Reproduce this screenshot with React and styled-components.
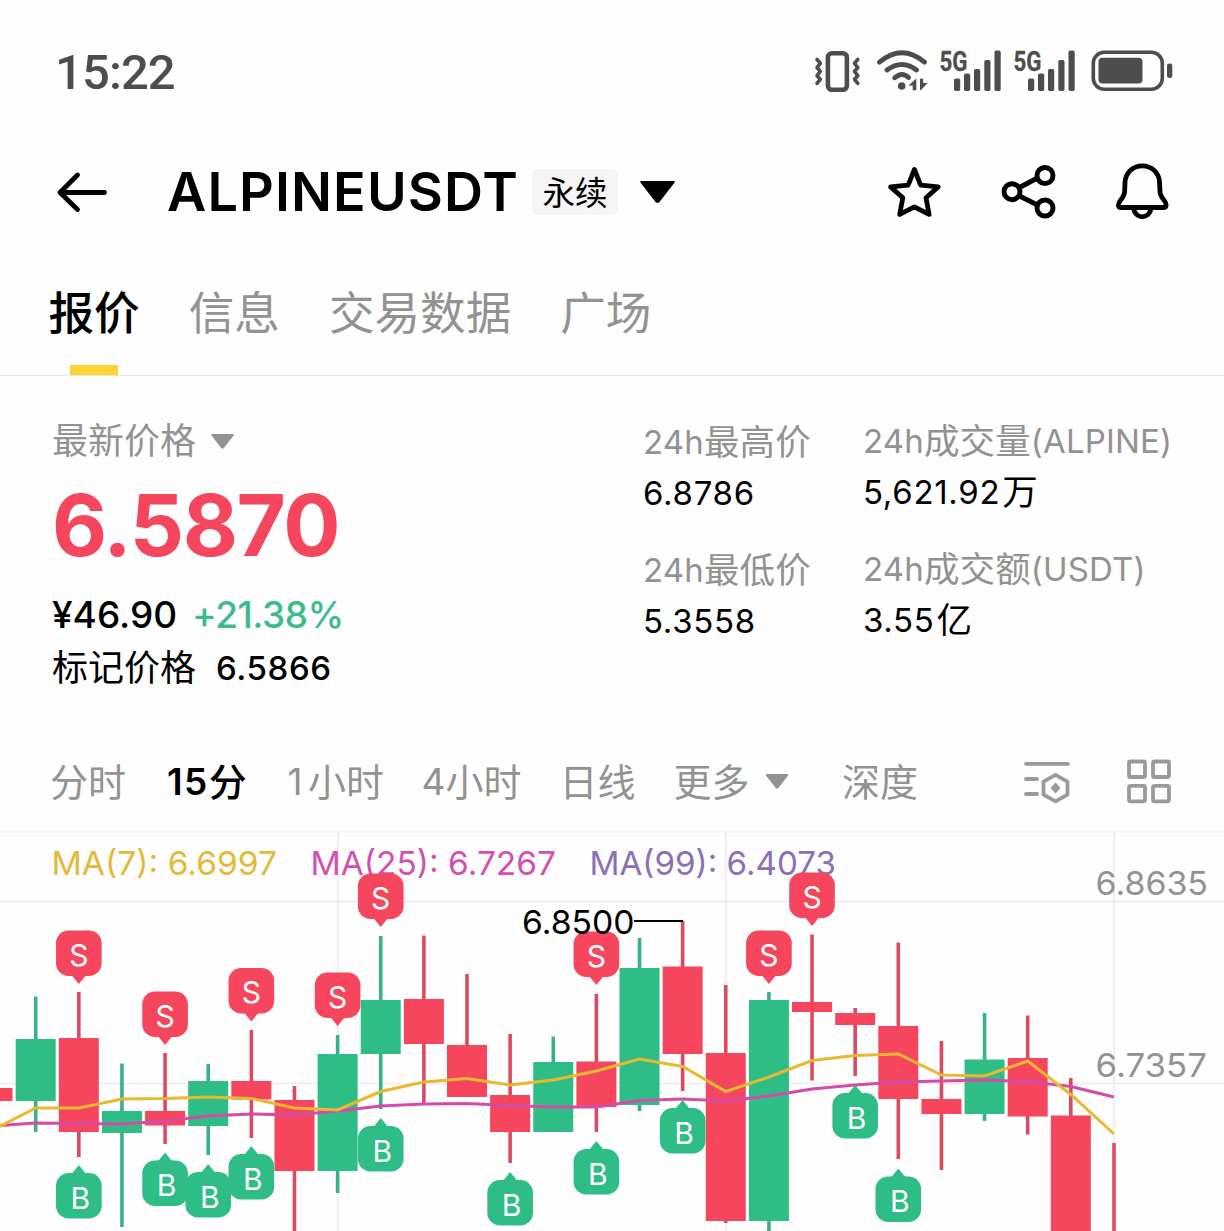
import React from "react"
import styled, { createGlobalStyle } from "styled-components"

const UP = "#2ebd85"
const DOWN = "#f6465d"
const GREY = "#929292"

const tabs = ["报价", "信息", "交易数据", "广场"]

const legend = [
  { label: "MA(7): 6.6997", x: 53, width: 223, color: "#e2b93b" },
  { label: "MA(25): 6.7267", x: 312, width: 243, color: "#d250b0" },
  { label: "MA(99): 6.4073", x: 591, width: 244, color: "#8a70b4" },
]

// distance between candles and x of the first one
const STEP = 43.13
const FIRST = 35.7
const xOf = (i) => FIRST + i * STEP

// [up, high, top, bottom, low, sell marker tip, buy marker tip]
const candles = [
  [1, 996.5, 1039, 1101, 1132],
  [0, 992, 1038, 1132, 1157, 984, 1165],
  [1, 1063.5, 1111, 1133, 1227],
  [0, 1053, 1111, 1125.5, 1144, 1045, 1152.5],
  [1, 1064, 1081, 1126, 1155, null, 1164],
  [0, 1030, 1081, 1099.5, 1138, 1021.5, 1146],
  [0, 1086, 1100, 1171, 1240],
  [1, 1035, 1054, 1171, 1193, 1026, null],
  [1, 936, 1000, 1054, 1109, 927, 1118],
  [0, 935.5, 999, 1044, 1103],
  [0, 974, 1045, 1097, 1097],
  [0, 1034, 1095, 1132, 1163, null, 1172],
  [1, 1036.5, 1062, 1132, 1132],
  [0, 994, 1061.5, 1107, 1132, 985, 1141],
  [1, 938, 968, 1105, 1111],
  [0, 921, 966.5, 1054, 1091, null, 1100],
  [0, 985, 1053, 1221, 1223],
  [1, 992, 1000, 1221, 1240, 984, null],
  [0, 934.5, 1002, 1012, 1080.5, 926, null],
  [0, 1008, 1013, 1025, 1076, null, 1085],
  [0, 942.5, 1026, 1099, 1159, null, 1168.5],
  [0, 1041, 1099, 1114, 1170],
  [1, 1013, 1059.5, 1114, 1121],
  [0, 1015.5, 1058, 1116.5, 1134.5],
  [0, 1078, 1115.5, 1240, 1240],
]

const ma7 = [1130, 1108, 1108, 1099, 1098.5, 1097, 1098.5, 1108, 1110, 1091.5, 1082, 1078.5, 1085, 1080, 1071, 1059, 1066.5, 1091.5, 1077, 1060.5, 1055.5, 1054, 1075, 1076, 1061, 1094.5, 1134]
const ma25 = [1126, 1123, 1123.5, 1124, 1121, 1116, 1114, 1115, 1111, 1106, 1104, 1103.5, 1105.5, 1107, 1107, 1100.5, 1099, 1101, 1096, 1089, 1085, 1082, 1081, 1080, 1081.5, 1086.5, 1097]
const toLine = (values) => values.map((y, i) => `${xOf(i - 1)},${y}`).join(" ")

function Signal() {
  return (
    <svg width="66" height="60" viewBox="937 41 66 60" fill="#4d4d4d">
      <text x="939.5" y="70.5" fontFamily="Roboto" fontWeight="700" fontSize="28" stroke="#4d4d4d" strokeWidth=".3" textLength="28" lengthAdjust="spacingAndGlyphs">5G</text>
      <rect x="954" y="78.5" width="6.2" height="12.5" rx="1.8" />
      <rect x="964" y="73.5" width="6.2" height="17.5" rx="1.8" />
      <rect x="974" y="69" width="6.2" height="22" rx="1.8" />
      <rect x="984.3" y="60" width="6.2" height="31" rx="1.8" />
      <rect x="994.5" y="50.5" width="6.2" height="40.5" rx="1.8" />
    </svg>
  )
}

function StatusIcons() {
  return (
    <IconRow>
      <svg width="48" height="44" viewBox="813 49 48 44" fill="none" stroke="#4d4d4d" strokeLinecap="round" strokeLinejoin="round">
        <rect x="827.9" y="53.2" width="19" height="36.6" rx="4" strokeWidth="4.6" />
        <path d="M817 59.5l3.3 3.8-3.3 4.2 3.3 4-3.3 4.2 3.3 3.6-3.3 4M857.8 59.5l-3.3 3.8 3.3 4.2-3.3 4 3.3 4.2-3.3 3.6 3.3 4" strokeWidth="3.6" />
      </svg>
      <WifiIcon width="52" height="44" viewBox="876 49 52 44" fill="none" stroke="#4d4d4d" strokeWidth="4.8" strokeLinecap="round">
        <path d="M879.5 62.2Q902 43.5 924.5 62.2M887 70Q902 59 916.5 70M894.8 77.8Q902 71.5 908.5 77.5" />
        <circle cx="901.7" cy="86" r="3.8" fill="#4d4d4d" stroke="none" />
        <path d="M908.5 85.5l7.8-7v11.7h-3.6v-4.7zM920 78.7h3.2v4.4h4.4L920.8 90.2h-.8z" fill="#4d4d4d" stroke="none" />
      </WifiIcon>
      <Signal />
      <SecondSignal><Signal /></SecondSignal>
      <svg width="84" height="44" viewBox="1090 49 84 44" fill="#4d4d4d">
        <rect x="1093.3" y="52.2" width="69" height="37" rx="11" fill="none" stroke="#4d4d4d" strokeWidth="3.6" />
        <rect x="1098.5" y="57.8" width="44" height="25.7" rx="4" />
        <rect x="1167" y="63.5" width="5.3" height="14.5" rx="2.3" />
      </svg>
    </IconRow>
  )
}

function HeaderActions() {
  return (
    <IconRow>
      <svg width="60" height="60" viewBox="884 162 60 60" fill="none" stroke="#000" strokeWidth="4.8" strokeLinejoin="round">
        <path d="M914.4 169.4l5.5 13.9 1 1.9 17.3 1.7-12.2 10.8 3.1 16.7-14.7-7.6-14.7 7.6 3.1-16.7-12.2-10.8 17.3-1.7 1-1.9z" />
      </svg>
      <ShareIcon width="60" height="60" viewBox="999 162 60 60" fill="none" stroke="#000" strokeWidth="4.9">
        <circle cx="1012" cy="191.7" r="8" />
        <circle cx="1045" cy="175.5" r="8" />
        <circle cx="1045" cy="208" r="8" />
        <path d="M1019.5 187.5l18-9.5M1019.5 196l18 9" />
      </ShareIcon>
      <svg width="60" height="60" viewBox="1112 162 60 60" fill="none" stroke="#000" strokeWidth="4.8" strokeLinejoin="round">
        <path d="M1142.3 165.8c-9.7 0-17 7.2-17.3 17l-.4 9c-.2 3.5-2.5 6.5-4.6 9.3-1.5 2-2.7 6.4.6 6.4h43.4c3.3 0 2.1-4.4.6-6.4-2.1-2.8-4.4-5.8-4.6-9.3l-.4-9c-.3-9.8-7.6-17-17.3-17z" />
        <path d="M1133.5 208.5c1 5.2 4.5 8.3 8.8 8.3s7.8-3.1 8.8-8.3" />
      </svg>
    </IconRow>
  )
}

function Marker({ x, tip, sell }) {
  const top = sell ? tip - 53.5 : tip + 8
  return (
    <g>
      <rect x={x - 22.8} y={top} width="45.6" height="45.5" rx="12.5" fill={sell ? DOWN : UP} />
      {sell
        ? <path d={`M${x - 9} ${tip - 8.5}l2.5 .5L${x} ${tip}l6.5 -8 2.5-.5z`} fill={DOWN} />
        : <path d={`M${x - 9} ${tip + 8.5}l2.5-.5L${x} ${tip}l6.5 8 2.5.5z`} fill={UP} />}
      <MarkerText x={sell ? x : x + 1.5} y={sell ? top + 35 : top + 35.5}>{sell ? "S" : "B"}</MarkerText>
    </g>
  )
}

function Chart() {
  return (
    <ChartSvg viewBox="0 833 1224 398">
      <g stroke="#ececec" strokeWidth="1.6">
        <path d="M0 901.5H1224M0 1083.5H1224M338 833V1231M726 833V1231M1114 833V1231" />
      </g>
      {legend.map((item) => (
        <ChartText key={item.label} x={item.x - 1.5} y="875.3" fill={item.color} textLength={item.width + 2.5} lengthAdjust="spacingAndGlyphs">{item.label}</ChartText>
      ))}
      <ChartText x="1095.5" y="895.3" fill={GREY} textLength="112.5" lengthAdjust="spacingAndGlyphs">6.8635</ChartText>
      <ChartText x="1095.5" y="1077.3" fill={GREY} textLength="111.5" lengthAdjust="spacingAndGlyphs">6.7357</ChartText>

      <rect x="-28" y="1088" width="40.5" height="13" fill={DOWN} />
      {candles.map(([up, high, top, bottom, low], i) => (
        <g key={i}>
          <path d={`M${xOf(i)} ${high}V${low}`} stroke={up ? "#38b184" : "#dc4a61"} strokeWidth="3.6" />
          <rect x={xOf(i) - 20} y={top} width="40" height={bottom - top} fill={up ? UP : DOWN} />
        </g>
      ))}
      <path d="M1114 1143V1231" stroke="#e8485f" strokeWidth="3.6" />

      <polyline points={toLine(ma25)} fill="none" stroke="#d64aa8" strokeWidth="3" />
      <polyline points={toLine(ma7)} fill="none" stroke="#e8b830" strokeWidth="3" />

      <path d="M634 921H683" stroke="#000" strokeWidth="1.8" />
      {candles.map((c, i) => (
        <g key={i}>
          {c[5] && <Marker x={xOf(i)} tip={c[5]} sell />}
          {c[6] && <Marker x={xOf(i)} tip={c[6]} />}
        </g>
      ))}
      <ChartText x="522" y="934.3" fill="#000" textLength="112.5" lengthAdjust="spacingAndGlyphs">6.8500</ChartText>
    </ChartSvg>
  )
}

function App() {
  return (
    <Page>
      <GlobalStyle />
      <StatusBar>
        <Clock>15:22</Clock>
        <StatusIcons />
      </StatusBar>

      <Header>
        <svg width="54" height="44" viewBox="55 170 54 44" fill="none" stroke="#000" strokeWidth="4.8" strokeLinecap="round" strokeLinejoin="round">
          <path d="M104.5 192.5H60M77.5 175L60 192.5l17.5 17" />
        </svg>
        <Symbol>ALPINEUSDT</Symbol>
        <Badge>永续</Badge>
        <Caret $w={35} $h={23} $color="#000" />
        <HeaderActions />
      </Header>

      <Tabs>
        {tabs.map((tab, i) => (
          <Tab key={tab} $active={i === 0}>{tab}</Tab>
        ))}
      </Tabs>

      <Ticker>
        <PriceBlock>
          <PriceLabel>最新价格 <Caret $w={23} $h={15} $color={GREY} /></PriceLabel>
          <LastPrice>6.5870</LastPrice>
          <Converted>¥46.90 <Change>+21.38%</Change></Converted>
          <MarkPrice>标记价格 <span>6.5866</span></MarkPrice>
        </PriceBlock>
        <StatColumn $w={220}>
          <Stat><dt>24h<Han>最高价</Han></dt><dd>6.8786</dd></Stat>
          <Stat><dt>24h<Han>最低价</Han></dt><dd>5.3558</dd></Stat>
        </StatColumn>
        <StatColumn $up>
          <Stat><dt>24h<Han>成交量</Han>(ALPINE)</dt><dd>5,621.92<Han>万</Han></dd></Stat>
          <Stat><dt>24h<Han>成交额</Han>(USDT)</dt><dd>3.55<Han>亿</Han></dd></Stat>
        </StatColumn>
      </Ticker>

      <Intervals>
        <Interval $w={117}>分时</Interval>
        <Interval $w={120.5} $active $space={1.4}><b>15</b>分</Interval>
        <Interval $w={134} $space={5.5}><b>1</b>小时</Interval>
        <Interval $w={138} $space={0}><b>4</b>小时</Interval>
        <Interval $w={114}>日线</Interval>
        <Interval $w={168.5}>更多 <Caret $w={23} $h={15} $color={GREY} /></Interval>
        <Interval $w={181}>深度</Interval>
        <svg width="48" height="46" viewBox="1024 759 48 46" fill="none" stroke="#9a9a9a" strokeWidth="3.8" strokeLinecap="round" strokeLinejoin="round">
          <path d="M1027 763.8H1069M1027 779H1038M1027 794H1038M1056.5 774.8l12 6.8v13l-12 6.8-12-6.8v-13z" />
          <path d="M1056.5 782.5l5 5.5-5 5.5-5-5.5z" fill="#9a9a9a" stroke="none" />
        </svg>
        <GridIcon width="48" height="48" viewBox="1125 758 48 48" fill="none" stroke="#9a9a9a" strokeWidth="3.8">
          <rect x="1129" y="761.5" width="16" height="15.5" rx="1.5" />
          <rect x="1153" y="761.5" width="16" height="15.5" rx="1.5" />
          <rect x="1129" y="785.8" width="16" height="15.5" rx="1.5" />
          <rect x="1153" y="785.8" width="16" height="15.5" rx="1.5" />
        </GridIcon>
      </Intervals>

      <Chart />
    </Page>
  )
}

export default App

const GlobalStyle = createGlobalStyle`
  * {
    box-sizing: border-box;
  }
  body {
    margin: 0;
    background: #fefefe;
  }
`;

const Page = styled.div`
  display: flex;
  flex-direction: column;
  width: 1224px;
  height: 1231px;
  overflow: hidden;
  background: #fefefe;
  color: #000;
  font-family: Inter, "Noto Sans CJK SC", sans-serif;
  white-space: nowrap;

  svg {
    display: block;
    flex-shrink: 0;
  }
`;

const StatusBar = styled.div`
  display: flex;
  align-items: center;
  justify-content: space-between;
  height: 142px;
  padding: 0 50px 0 55px;
`;

const Clock = styled.span`
  padding-top: 3px;
  color: #4d4d4d;
  font-family: Roboto, sans-serif;
  font-size: 49px;
  font-weight: 500;
  letter-spacing: -0.9px;
  line-height: 58px;
`;

const IconRow = styled.div`
  display: flex;
  align-items: center;
`;

const WifiIcon = styled.svg`
  margin: 0 9px 0 15px;
`;

const SecondSignal = styled.div`
  margin: 0 13px 0 8px;
`;

const Header = styled.header`
  display: flex;
  align-items: center;
  height: 100px;
  padding: 0 52px 0 55px;

  ${IconRow} {
    margin-left: auto;
  }
`;

const Symbol = styled.h1`
  width: 365px;
  margin: 0 0 0 58px;
  font-size: 54px;
  font-weight: 600;
  letter-spacing: 1.1px;
  line-height: 60px;
`;

const Badge = styled.span`
  height: 46px;
  padding: 0 10.5px;
  margin-right: 22px;
  border-radius: 6px;
  background: #f5f5f5;
  font-size: 32.5px;
  line-height: 49px;
`;

const Caret = styled.i`
  display: inline-block;
  width: ${(props) => props.$w}px;
  height: ${(props) => props.$h}px;
  background: ${(props) => props.$color};
  clip-path: polygon(4% 0, 96% 0, 100% 7%, 54% 97%, 46% 97%, 0 7%);
`;

const ShareIcon = styled.svg`
  margin: 0 53px 0 55px;
`;

const Tabs = styled.nav`
  display: flex;
  gap: 49px;
  height: 134px;
  padding: 49px 48.5px 0;
  border-bottom: 1.5px solid #e6e6e6;
`;

const Tab = styled.span`
  display: flex;
  flex-direction: column;
  align-items: center;
  justify-content: space-between;
  color: ${(props) => (props.$active ? "#000" : GREY)};
  font-size: 45.6px;
  font-weight: ${(props) => (props.$active ? 500 : 400)};
  line-height: 46px;

  &::after {
    content: "";
    width: 48px;
    height: 10px;
    background: ${(props) => (props.$active ? "#fcd535" : "transparent")};
  }
`;

const Ticker = styled.section`
  display: flex;
  height: 357px;
  padding: 41px 0 0 52px;
`;

const PriceBlock = styled.div`
  display: flex;
  flex-direction: column;
  width: 591px;
`;

const PriceLabel = styled.div`
  display: flex;
  align-items: center;
  gap: 15px;
  height: 49px;
  color: ${GREY};
  font-size: 36px;
  line-height: 51px;
`;

const LastPrice = styled.strong`
  color: ${DOWN};
  font-size: 85px;
  font-weight: 700;
  letter-spacing: -1.4px;
  line-height: 120px;
`;

const Converted = styled.div`
  display: flex;
  gap: 15px;
  font-size: 37px;
  font-weight: 500;
  line-height: 57px;
`;

const Change = styled.span`
  color: #3dbb8a;
  letter-spacing: -0.5px;
`;

const MarkPrice = styled.div`
  display: flex;
  gap: 20px;
  font-size: 36px;
  line-height: 50px;

  span {
    font-size: 33px;
    font-weight: 500;
    letter-spacing: 0.6px;
  }
`;

const StatColumn = styled.div`
  display: flex;
  flex-direction: column;
  gap: 26px;
  width: ${(props) => (props.$w ? `${props.$w}px` : "auto")};
  margin-top: ${(props) => (props.$up ? "-1px" : "0")};
`;

const Stat = styled.dl`
  margin: 0;
  font-size: 33px;

  dt {
    color: ${GREY};
    letter-spacing: 0.15px;
    line-height: 51px;
  }
  dd {
    margin: 0;
    letter-spacing: 0.7px;
    line-height: 51px;
  }
`;

const Han = styled.span`
  font-size: 35.5px;
  line-height: 1;
  vertical-align: -1px;

  dd & {
    margin-left: 2px;
  }
`;

const Intervals = styled.nav`
  display: flex;
  align-items: center;
  height: 100px;
  padding: 0 51px 0 50px;
  border-bottom: 3px solid #f5f5f5;
`;

const Interval = styled.span`
  display: flex;
  align-items: center;
  width: ${(props) => props.$w}px;
  color: ${(props) => (props.$active ? "#000" : GREY)};
  font-size: 38px;
  font-weight: ${(props) => (props.$active ? 500 : 400)};
  line-height: 50px;

  b {
    font-size: 37px;
    font-weight: ${(props) => (props.$active ? 600 : 400)};
    letter-spacing: ${(props) => props.$space}px;
  }
  ${Caret} {
    margin-left: 16px;
  }
`;

const GridIcon = styled.svg`
  margin-left: auto;
`;

const ChartSvg = styled.svg`
  width: 1224px;
  height: 398px;
`;

const ChartText = styled.text`
  font-family: Inter, sans-serif;
  font-size: 33px;
`;

const MarkerText = styled.text`
  fill: #fff;
  font-family: Inter, sans-serif;
  font-size: 30px;
  text-anchor: middle;
`;
